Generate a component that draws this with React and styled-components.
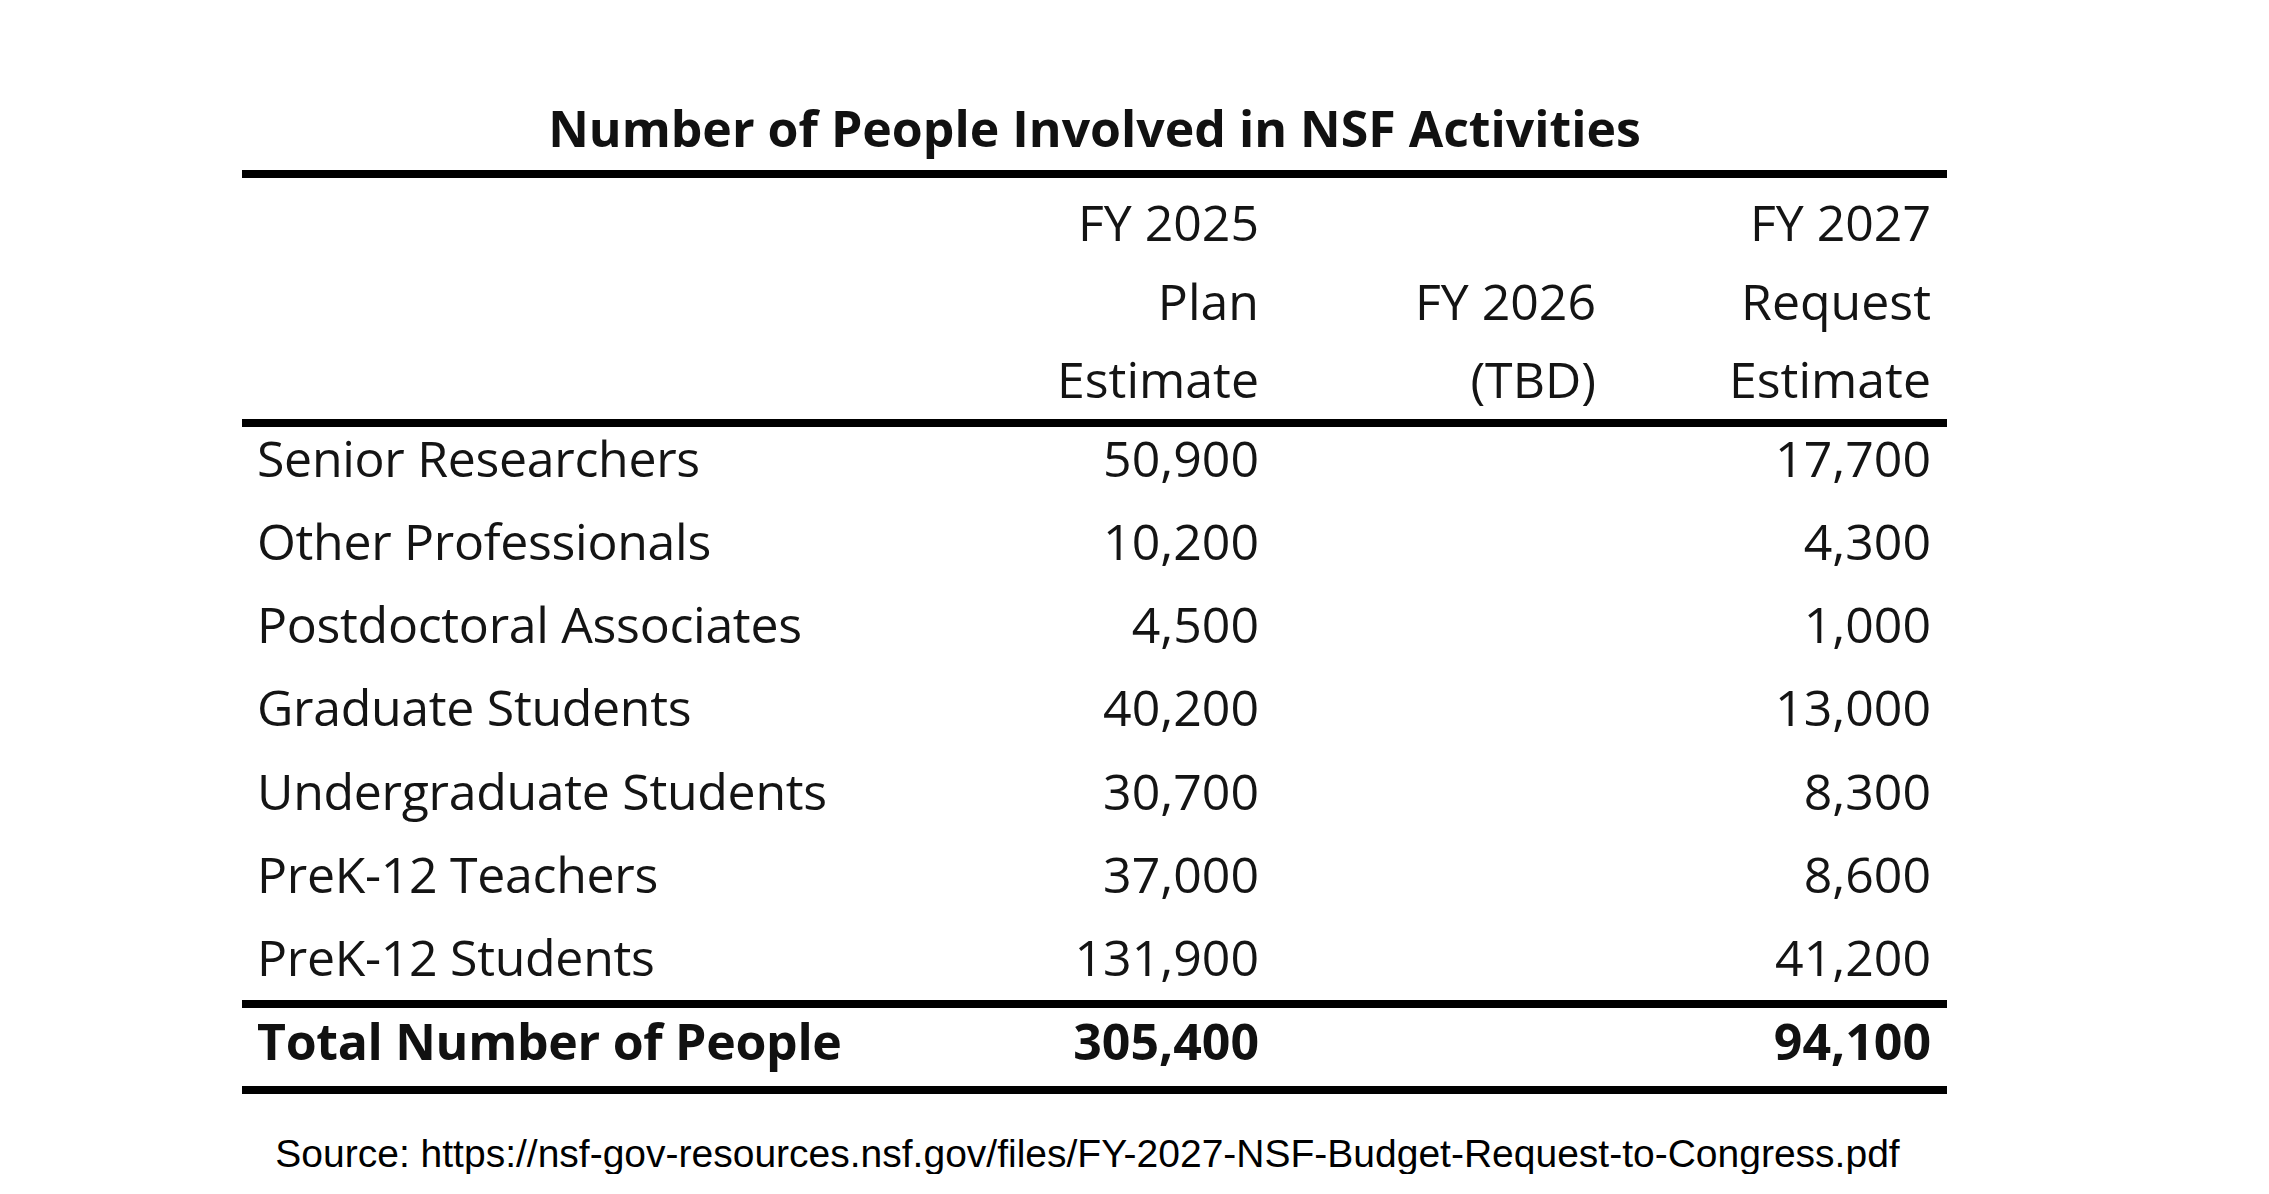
import React from "react";
import styled, { createGlobalStyle } from "styled-components";

// 표 데이터
const rows = [
  { label: "Senior Researchers", fy25: "50,900", fy26: "", fy27: "17,700" },
  { label: "Other Professionals", fy25: "10,200", fy26: "", fy27: "4,300" },
  { label: "Postdoctoral Associates", fy25: "4,500", fy26: "", fy27: "1,000" },
  { label: "Graduate Students", fy25: "40,200", fy26: "", fy27: "13,000" },
  { label: "Undergraduate Students", fy25: "30,700", fy26: "", fy27: "8,300" },
  { label: "PreK-12 Teachers", fy25: "37,000", fy26: "", fy27: "8,600" },
  { label: "PreK-12 Students", fy25: "131,900", fy26: "", fy27: "41,200" },
];

const GlobalStyle = createGlobalStyle`
  html, body {
    margin: 0;
    padding: 0;
    background: #ffffff;
  }
  body {
    font-family: "Open Sans", "Noto Sans", sans-serif;
    color: #141414;
  }
`;

// 전체 페이지
const Page = styled.div`
  padding: 98px 0 0 242px;
  width: 1705px;
`;

// 제목
const Title = styled.div`
  font-weight: 700;
  font-size: 50px;
  line-height: 60px;
  text-align: center;
  margin-bottom: 12px;
  color: #111;
`;

const COLUMNS = "696px 337px 337px 335px";

// 머리글 (위 아래 굵은 선)
const Head = styled.div`
  display: grid;
  grid-template-columns: ${COLUMNS};
  align-items: end;
  border-top: 8px solid #000;
  border-bottom: 8px solid #000;
  padding-top: 5px;
  font-size: 50px;
  line-height: 78.5px;
`;

const HeadCell = styled.div`
  text-align: right;
  padding-right: 16px;
`;

const HeadLine = styled.div`
  white-space: nowrap;
`;

// 본문 행
const Row = styled.div`
  display: grid;
  grid-template-columns: ${COLUMNS};
  font-size: 50px;
  line-height: 62px;
  padding-bottom: 21.33px;

  &:last-child {
    padding-bottom: 12px;
  }
`;

// 합계 행
const TotalRow = styled.div`
  display: grid;
  grid-template-columns: ${COLUMNS};
  font-size: 50px;
  font-weight: 700;
  line-height: 67px;
  padding-bottom: 10.5px;
  border-top: 8px solid #000;
  border-bottom: 8px solid #000;
  color: #111;
`;

const Label = styled.div`
  padding-left: 15px;
  letter-spacing: -0.3px;
  white-space: nowrap;
`;

const Num = styled.div`
  text-align: right;
  padding-right: 16px;
  white-space: nowrap;
`;

// 출처
const Source = styled.div`
  margin-top: 40px;
  padding-right: 14px;
  font-family: "Liberation Sans", Arial, sans-serif;
  font-size: 39px;
  line-height: 40px;
  text-align: center;
  color: #000;
  white-space: nowrap;
`;

const App = () => {
  return (
    <>
      <GlobalStyle />
      <Page>
        <Title>Number of People Involved in NSF Activities</Title>
        <Head>
          <div />
          <HeadCell>
            <HeadLine>FY 2025</HeadLine>
            <HeadLine>Plan</HeadLine>
            <HeadLine>Estimate</HeadLine>
          </HeadCell>
          <HeadCell>
            <HeadLine>FY 2026</HeadLine>
            <HeadLine>(TBD)</HeadLine>
          </HeadCell>
          <HeadCell>
            <HeadLine>FY 2027</HeadLine>
            <HeadLine>Request</HeadLine>
            <HeadLine>Estimate</HeadLine>
          </HeadCell>
        </Head>
        <div>
          {rows.map((r) => (
            <Row key={r.label}>
              <Label>{r.label}</Label>
              <Num>{r.fy25}</Num>
              <Num>{r.fy26}</Num>
              <Num>{r.fy27}</Num>
            </Row>
          ))}
        </div>
        <TotalRow>
          <Label>Total Number of People</Label>
          <Num>305,400</Num>
          <Num />
          <Num>94,100</Num>
        </TotalRow>
        <Source>
          Source: https://nsf-gov-resources.nsf.gov/files/FY-2027-NSF-Budget-Request-to-Congress.pdf
        </Source>
      </Page>
    </>
  );
};

export default App;
